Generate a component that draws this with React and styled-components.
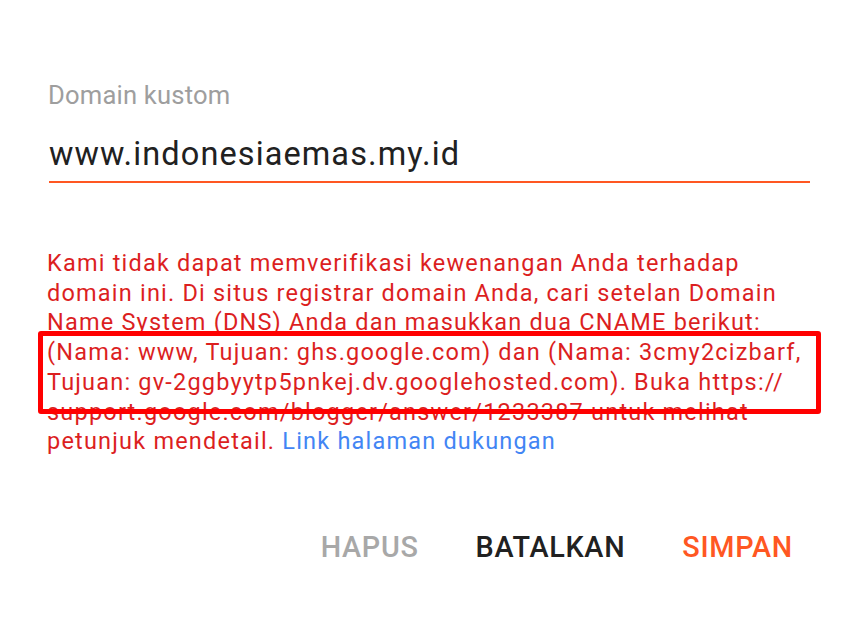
import styled, { createGlobalStyle } from 'styled-components'

const GlobalStyle = createGlobalStyle`
  html, body {
    margin: 0;
    padding: 0;
    background: #ffffff;
  }
  body {
    font-family: Roboto, "Noto Sans", Arial, sans-serif;
    overflow: hidden;
  }
`

const Dialog = styled.div`
  width: 853px;
  height: 618px;
  box-sizing: border-box;
  padding: 80px 43px 0 49px;
  display: flex;
  flex-direction: column;
`
const Label = styled.label`
  font-size: 25.6px;
  line-height: 30px;
  color: #9e9e9e;
  margin-left: -1px;
  letter-spacing: 0.2px;
`
const Field = styled.div`
  margin-top: 24px;
  padding-bottom: 7px;
  border-bottom: 2px solid #ff5722;
`
const Input = styled.div`
  font-size: 32.5px;
  line-height: 40px;
  letter-spacing: 1.1px;
  color: #212121;
`
const ErrorText = styled.p`
  position: relative;
  margin: 66px 0 0 -2px;
  font-size: 23.5px;
  line-height: 29.7px;
  letter-spacing: 1.2px;
  color: #dc1f1f;
`
const Link = styled.a`
  color: #4285f4;
  text-decoration: none;
`
const Highlight = styled.span`
  position: absolute;
  left: -9px;
  top: 82px;
  width: 783px;
  height: 83px;
  box-sizing: border-box;
  border: 5px solid #ff0000;
  border-radius: 3px;
  pointer-events: none;
`
const Actions = styled.div`
  display: flex;
  justify-content: flex-end;
  gap: 29px;
  margin-top: 72px;
  margin-right: 3px;
`
const Button = styled.button`
  background: none;
  border: none;
  padding: 0 14px;
  font-family: inherit;
  font-size: 28.8px;
  line-height: 36px;
  font-weight: 500;
  letter-spacing: 0.7px;
  text-transform: uppercase;
  color: ${props => props.color};
  cursor: pointer;
`

const App = () => {
  return (
    <>
      <GlobalStyle />
      <Dialog>
        <Label>Domain kustom</Label>
        <Field>
          <Input>www.indonesiaemas.my.id</Input>
        </Field>
        <ErrorText>
          Kami tidak dapat memverifikasi kewenangan Anda terhadap domain ini. Di
          situs registrar domain Anda, cari setelan Domain Name System (DNS)
          Anda dan masukkan dua CNAME berikut: (Nama: www, Tujuan:
          ghs.google.com) dan (Nama: 3cmy2cizbarf, Tujuan:
          gv-2ggbyytp5pnkej.dv.googlehosted.com). Buka https://
          support.google.com/blogger/answer/1233387 untuk melihat petunjuk
          mendetail. <Link href='#'>Link halaman dukungan</Link>
          <Highlight />
        </ErrorText>
        <Actions>
          <Button color='#a8a8a8'>Hapus</Button>
          <Button color='#212121'>Batalkan</Button>
          <Button color='#ff5722'>Simpan</Button>
        </Actions>
      </Dialog>
    </>
  )
}

export default App
